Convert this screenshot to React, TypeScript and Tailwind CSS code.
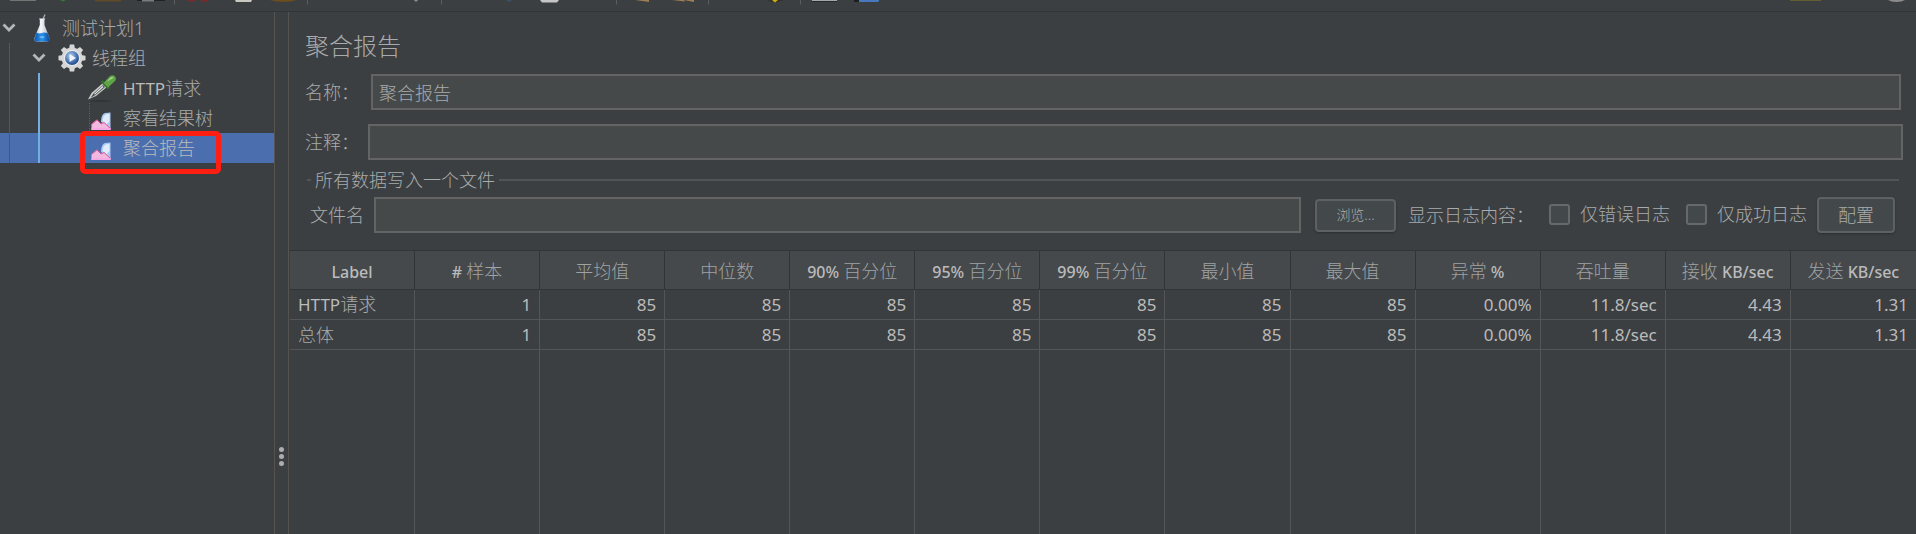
import React from "react";

const columns = [
  "Label",
  "# 样本",
  "平均值",
  "中位数",
  "90% 百分位",
  "95% 百分位",
  "99% 百分位",
  "最小值",
  "最大值",
  "异常 %",
  "吞吐量",
  "接收 KB/sec",
  "发送 KB/sec",
];

const rows = [
  ["HTTP请求", "1", "85", "85", "85", "85", "85", "85", "85", "0.00%", "11.8/sec", "4.43", "1.31"],
  ["总体", "1", "85", "85", "85", "85", "85", "85", "85", "0.00%", "11.8/sec", "4.43", "1.31"],
];

/** Sets Latin runs a little smaller and heavier than the Chinese text around them. */
function Mixed({ text, latin }: { text: string; latin: string }) {
  return (
    <>
      {text.split(/([\x20-\x7e]+)/).map((part, i) =>
        i % 2 ? (
          <span key={i} className={`whitespace-pre ${latin}`}>
            {part}
          </span>
        ) : (
          part
        ),
      )}
    </>
  );
}

function ToolbarLeft() {
  return (
    <svg width="890" height="12" viewBox="0 0 890 12" className="block shrink-0" aria-hidden="true">
      <path d="M10 0h26v1H10z" fill="#727672" />
      <path d="M60 0h6l-3 1.5z" fill="#2f7d35" />
      <path d="M95 0h26v1.5H95z" fill="#5f4a29" />
      <path d="M137 0h28v1h-28z" fill="#202223" />
      <path d="M142 0h12v1.5h-12z" fill="#777b7d" />
      <path d="M187 0h7l2 1.5h-7zM202 0h7l-2 1.5h-7z" fill="#7a2a2c" />
      <path d="M235 0h17l-1 2h-15z" fill="#c9c9c2" />
      <path d="M270 0h27q-6 2-13.500 2t-13.500-2z" fill="#6b4d20" />
      <path d="M414 0h4l-1 1.500h-2z" fill="#8a8c8c" />
      <path d="M506 0h6l-2 1.500h-2z" fill="#3c5070" />
      <path d="M540 0h19l-2 2.500h-15z" fill="#c4c6c7" />
      <path d="M635 0h14v2l-3-.5zM672 0h12l1 1.500zM684 0h10v2z" fill="#a17f54" />
      <path d="M766 0h18l-6 2h-6z" fill="#33332e" />
      <path d="M772 0h6l-3 2.500z" fill="#d2ac16" />
      <path d="M812 0h25v1.500h-25z" fill="#a4a8aa" />
      <path d="M812 1h25v1h-25z" fill="#26292a" />
      <path d="M854 0h6v2h-6z" fill="#1c1f22" />
      <path d="M859 0h20v1l-1 1h-19z" fill="#4878bd" />
      <path d="M174.500 0v4.500M307.500 0v4.500M441.500 0v4.500M616.500 0v4.500M708.500 0v4.500M800.500 0v4.500" stroke="#5e5c5a" />
    </svg>
  );
}

function ToolbarRight() {
  return (
    <svg width="126" height="12" viewBox="0 0 126 12" className="block shrink-0" aria-hidden="true">
      <path d="M0 0h31v1H0z" fill="#635d34" />
      <path d="M98 0h17q-3 2-8.500 2t-8.500-2z" fill="#8c8c8c" />
    </svg>
  );
}

function Chevron() {
  return (
    <svg width="14" height="10" viewBox="0 0 14 10" className="shrink-0" aria-hidden="true">
      <path d="M1.500 1.500l5.500 5.500L12.500 1.500" fill="none" stroke="#b4b6b7" strokeWidth="2.800" />
    </svg>
  );
}

function FlaskIcon() {
  return (
    <svg width="18" height="30" viewBox="0 0 18 30" className="shrink-0" aria-hidden="true">
      <defs>
        <linearGradient id="glass" x1="0" x2="1">
          <stop offset="0" stopColor="#b5bfca" />
          <stop offset=".45" stopColor="#f4f7fa" />
          <stop offset="1" stopColor="#a8b0bc" />
        </linearGradient>
        <linearGradient id="liquid" x1="0" x2="1">
          <stop offset="0" stopColor="#0b55ad" />
          <stop offset=".5" stopColor="#2e93ea" />
          <stop offset="1" stopColor="#0a4796" />
        </linearGradient>
      </defs>
      <path d="M10 6l2-4.500" stroke="#a9adb2" strokeWidth="1.300" />
      <path d="M6 5.500h6.500l-1 1.500v5l5 13q.8 3-2 3.500H3Q.5 28 1.300 25L6.800 12V7z" fill="url(#glass)" />
      <path d="M3.500 19.500q3 1.500 5 .5t6 0l2.300 6q.5 2-2 2.500H3Q.8 28 1.300 26z" fill="url(#liquid)" />
      <path d="M6 24q3-2 6 0-3 2.500-6 0z" fill="#62b9f8" />
    </svg>
  );
}

const toothAngles = [0, 45, 90, 135, 180, 225, 270, 315];

function GearIcon() {
  return (
    <svg width="28" height="28" viewBox="0 0 28 28" className="shrink-0" aria-hidden="true">
      <defs>
        <radialGradient id="hub" cx=".4" cy=".35" r=".7">
          <stop offset="0" stopColor="#b9d0ee" />
          <stop offset=".55" stopColor="#5580bb" />
          <stop offset="1" stopColor="#183f80" />
        </radialGradient>
      </defs>
      <g fill="#d6d6d6">
        <circle cx="14" cy="14" r="10.500" />
        {toothAngles.map((a) => (
          <path key={a} d="M11 5l.8-4.500h4.400l.8 4.500z" transform={`rotate(${a} 14 14)`} />
        ))}
      </g>
      <circle cx="14" cy="14" r="8" fill="#eceded" />
      <circle cx="14" cy="14" r="7" fill="url(#hub)" />
      <path d="M11.500 10l6.500 4-6.500 4z" fill="#eef4fc" />
    </svg>
  );
}

function DropperIcon() {
  return (
    <svg width="28" height="28" viewBox="0 0 28 28" className="shrink-0" aria-hidden="true">
      <ellipse cx="13" cy="27" rx="11" ry=".8" fill="#2f3234" />
      <path d="M0 25.500l3.500-6.500L15 9l4 4L8 22z" fill="#c9cdcc" />
      <path d="M2.500 24l3-4.500L15 11l2 2-9.500 8z" fill="#4d5251" />
      <path d="M6 20L14.500 12l1 1-8.500 7.500z" fill="#e3e6e5" />
      <path d="M12.500 8l2-2 7.500 7.500-2 2z" fill="#346c2c" />
      <path d="M15.500 9l6-6.500Q25 0 27 2.500t-.5 5l-6.500 6z" fill="#5fa547" />
      <path d="M18.500 8l4-4.200q2-1.500 3 0z" fill="#a9dc92" />
    </svg>
  );
}

function ChartIcon() {
  return (
    <svg width="24" height="30" viewBox="0 0 24 30" className="shrink-0" aria-hidden="true">
      <path d="M1.500 0v30" stroke="#64686b" strokeDasharray="1 1.500" />
      <path d="M13 18.500q0-7 4-8.500l5.500-.5V26l-6-3z" fill="#a9c8f2" />
      <path d="M14.500 18q.5-5.500 3.500-6.800l3.500-.2v7l-3 3.500z" fill="#dfecfc" />
      <path d="M3.500 21l5.500-4.500 4 4 3-1.500 6.500 6v2h-19z" fill="#f3b8e0" />
      <path d="M3.500 21.500l5.500-4.500 4 4 3-1.500 6.500 6" fill="none" stroke="#d8589c" />
      <path d="M3.500 25h19v2h-19z" fill="#f7a9e4" />
    </svg>
  );
}

const fieldClass =
  "h-9 min-w-0 flex-1 border-2 border-[#646464] bg-[#45494a] px-1.5 text-[18px] font-light text-[#a9abac] outline-none";
const buttonClass = "rounded-[4px] border-2 border-[#5e6163] bg-[#43494b] font-light shadow-[0_1px_2px_#2c2f31]";
const checkClass = "size-[21px] shrink-0 appearance-none rounded-[3px] border-2 border-[#66696a] bg-[#43494b] checked:bg-[#4b6eaf]";

export default function App() {
  return (
    <div className="flex h-screen flex-col overflow-hidden bg-[#3c3f41] font-['Noto_Sans','Noto_Sans_CJK_SC',sans-serif] text-[18px] leading-[30px] font-light text-[#a9abac]">
      <header className="flex h-3 shrink-0 justify-between border-b border-[#323537]">
        <ToolbarLeft />
        <ToolbarRight />
      </header>

      <div className="flex min-h-0 flex-1">
        <nav className="w-[275px] shrink-0 border-r border-[#555350] pt-px" aria-label="测试计划1">
          <div className="flex h-[30px] items-center pl-0.5">
            <Chevron />
            <span className="w-[17px]" />
            <FlaskIcon />
            <span className="pl-[11px]">测试计划1</span>
          </div>
          <div className="ml-[9px] border-l border-[#555759]">
            <div className="flex h-[30px] items-center pl-[22px]">
              <Chevron />
              <span className="w-3" />
              <GearIcon />
              <span className="pl-1.5">线程组</span>
            </div>
            <div className="ml-7 flex h-[30px] items-center border-l-2 border-[#73aee0] pl-12">
              <DropperIcon />
              <span className="pl-[7px]">
                <Mixed text="HTTP请求" latin="text-[17px] font-normal text-[#bbbbbb]" />
              </span>
            </div>
            <div className="ml-7 flex h-[30px] items-center border-l-2 border-[#73aee0] pl-12">
              <ChartIcon />
              <span className="pl-[11px]">察看结果树</span>
            </div>
          </div>
          <div className="relative flex h-[30px] bg-[#4b6eaf] pl-[9px] text-[#bbbbbb]" aria-current="true">
            <div className="flex flex-1 border-l border-[#555759] pl-7">
              <div className="flex items-center border-l-2 border-[#73aee0] pl-12">
                <ChartIcon />
                <span className="pl-[11px]">聚合报告</span>
              </div>
            </div>
            <div className="pointer-events-none absolute -top-0.5 left-20 h-[43px] w-[141px] rounded-[5px] border-[5px] border-[#ff1e12]" />
          </div>
        </nav>

        <div className="flex w-3.5 shrink-0 flex-col items-center justify-end gap-0.5 border-r border-[#555350] pb-[68px]">
          <span className="size-[5px] rounded-full bg-[#adadad]" />
          <span className="size-[5px] rounded-full bg-[#adadad]" />
          <span className="size-[5px] rounded-full bg-[#adadad]" />
        </div>

        <main className="flex min-w-0 flex-1 flex-col pl-px">
          <div className="pr-[13px] pl-[15px]">
            <h1 className="pt-4 text-[24px] leading-9 font-light">聚合报告</h1>
            <div className="mt-2.5 flex items-center pr-0.5">
              <label htmlFor="name" className="w-[66px] shrink-0">
                名称：
              </label>
              <input id="name" defaultValue="聚合报告" className={fieldClass} />
            </div>
            <div className="mt-3.5 flex items-center">
              <label htmlFor="comment" className="w-[63px] shrink-0">
                注释：
              </label>
              <input id="comment" className={fieldClass} />
            </div>
            <fieldset className="mt-[5px]">
              <legend className="flex w-full items-center gap-1 pr-1 pl-0.5">
                <span className="h-0.5 w-1 bg-[#515456]" />
                <span>所有数据写入一个文件</span>
                <span className="h-0.5 flex-1 bg-[#515456]" />
              </legend>
              <div className="flex items-center pt-0.5 pr-2 pl-[5px]">
                <label htmlFor="file" className="w-16 shrink-0">
                  文件名
                </label>
                <input id="file" className={fieldClass} />
                <button type="button" className={`${buttonClass} ml-3.5 h-[33px] w-[81px] shrink-0 text-[14px] leading-5`}>
                  浏览...
                </button>
                <span className="w-[141px] shrink-0 pl-3 whitespace-nowrap">显示日志内容：</span>
                <label className="ml-3 flex shrink-0 items-center gap-2.5 pb-0.5">
                  <input type="checkbox" className={checkClass} />
                  仅错误日志
                </label>
                <label className="ml-4 flex shrink-0 items-center gap-2.5 pb-0.5">
                  <input type="checkbox" className={checkClass} />
                  仅成功日志
                </label>
                <button type="button" className={`${buttonClass} ml-2.5 h-9 w-[78px] shrink-0 text-[18px] leading-6`}>
                  配置
                </button>
              </div>
            </fieldset>
          </div>

          <div className="mt-[17px] min-h-0 flex-1">
            <table className="h-full w-full table-fixed border-separate border-spacing-0 whitespace-nowrap">
              <thead>
                <tr className="h-10">
                  {columns.map((c) => (
                    <th
                      key={c}
                      scope="col"
                      className="border-y border-r border-[#323537] bg-[#45494b] px-0 pt-0.5 pb-0 text-center text-[18px] leading-6 font-light text-[#a0a2a3] last:border-r-0"
                    >
                      <Mixed text={c} latin="text-[16px] font-medium text-[#bbbbbb]" />
                    </th>
                  ))}
                </tr>
              </thead>
              <tbody>
                {rows.map((r) => (
                  <tr key={r[0]} className="h-[30px]">
                    {r.map((v, i) => (
                      <td
                        key={i}
                        className="border-r border-b border-[#535557] px-2 py-0 text-right text-[18px] leading-6 font-light first:text-left last:border-r-0"
                      >
                        <Mixed text={v} latin="text-[17px] font-normal text-[#bbbbbb]" />
                      </td>
                    ))}
                  </tr>
                ))}
                <tr aria-hidden="true">
                  {columns.map((c) => (
                    <td key={c} className="border-r border-[#535557] p-0 last:border-r-0" />
                  ))}
                </tr>
              </tbody>
            </table>
          </div>
        </main>
      </div>
    </div>
  );
}
